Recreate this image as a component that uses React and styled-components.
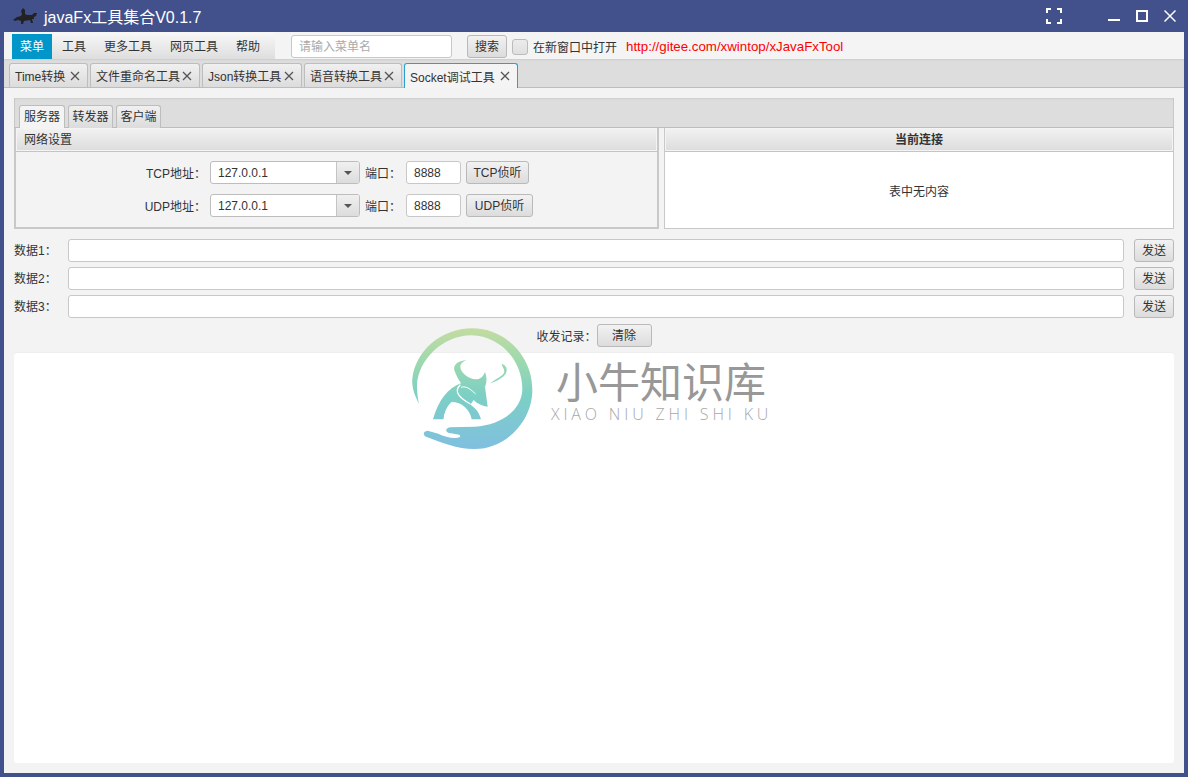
import React from 'react';
import styled, { createGlobalStyle } from 'styled-components';

const Global = createGlobalStyle`
  html, body { margin: 0; padding: 0; height: 100%; overflow: hidden; }
  body { font-family: "Liberation Sans", "Noto Sans CJK SC", sans-serif; font-size: 12px; color: #333; }
`;
const Frame = styled.div`
  width: 1188px; height: 777px; box-sizing: border-box; background: #42518c; position: relative;
  display: flex; flex-direction: column; padding: 0 4px 4px;
`;
const TitleBar = styled.div`
  height: 32px; flex: none; margin: 0 -4px; display: flex; align-items: center; color: #fff; padding-left: 12px;
`;
const AppIcon = styled.svg` width: 26px; height: 20px; margin-right: 6px; `;
const AppTitle = styled.div` font-size: 16px; flex: 1; `;
const WinControls = styled.div` display: flex; align-items: center; padding-right: 12px; `;
const WinBtn = styled.svg` width: ${p => p.$w}px; height: ${p => p.$h || 14}px; margin-left: ${p => p.$ml}px; display: block; `;
const Toolbar = styled.div`
  height: 27px; flex: none; background: #f4f4f4; display: flex; padding-left: 8px;
`;
const MenuBar = styled.div`
  display: flex; height: 27px; width: 263px; padding-top: 2px; box-sizing: border-box; margin-right: 16px; gap: 2px;
  background: linear-gradient(#f8f8f8, #dedede);
`;
const MenuItem = styled.div`
  height: 25px; line-height: 26px; padding: 0 8px; white-space: nowrap;
  background: ${p => p.$active ? '#0096c9' : 'transparent'};
  color: ${p => p.$active ? '#fff' : '#333'};
`;
const ToolGroup = styled.div` display: flex; align-items: center; padding-top: 2px; height: 25px; `;
const SearchBox = styled.div`
  width: 161px; height: 23px; box-sizing: border-box; border: 1px solid #c8c8c8; border-radius: 3px; background: #fff;
  color: #aaa; line-height: 22px; padding-left: 7px; margin-right: 15px;
`;
const Button = styled.div`
  box-sizing: border-box; height: 23px; width: ${p => p.$w}px; flex: none;
  border: 1px solid #b9b9b9; border-radius: 3px; background: linear-gradient(#f2f2f2, #dcdcdc);
  text-align: center; line-height: 22px; color: #333; margin-left: ${p => p.$ml || 0}px;
`;
const Check = styled.div`
  width: 16px; height: 16px; box-sizing: border-box; border: 1px solid #bbb; border-radius: 3px;
  background: linear-gradient(#ececec, #e0e0e0); margin: 0 5px;
`;
const Link = styled.div` color: #f00; margin-left: 9px; font-size: 13.3px; white-space: nowrap; `;
const TabStrip = styled.div`
  height: 29px; flex: none; background: #ddd; border-bottom: 1px solid #bdbdbd; box-sizing: border-box;
  display: flex; align-items: flex-end; padding-left: 5px; gap: 2px;
  box-shadow: inset 0 2px 2px -1px #ccc;
`;
const Tab = styled.div`
  box-sizing: border-box; height: 24px; width: ${p => p.$w}px; display: flex; align-items: center; white-space: nowrap;
  justify-content: space-between; padding: 0 7px 0 5px; color: #333; flex: none;
  border: 1px solid ${p => p.$active ? '#2a9fd0' : '#bdbdbd'}; border-bottom: none; border-radius: 3px 3px 0 0;
  background: ${p => p.$active ? '#f4f4f4' : 'linear-gradient(#f0f0f0, #dcdcdc)'};
  ${p => p.$active ? 'height: 25px; margin-bottom: -1px;' : ''}
`;
const CloseIcon = styled.svg` width: 10px; height: 10px; flex: none; `;
const Content = styled.div`
  flex: 1; background: #f3f3f3; padding: 10px; display: flex; flex-direction: column; min-height: 0;
`;
const InnerPane = styled.div`
  height: 131px; flex: none; display: flex; flex-direction: column;
`;
const InnerStrip = styled.div`
  height: 30px; flex: none; box-sizing: border-box; background: #ddd; border: 1px solid #c8c8c8; border-width: 0 1px 1px;
  border-bottom-color: #bdbdbd;
  display: flex; align-items: flex-end; padding-left: 4px; gap: 3px;
  box-shadow: inset 0 2px 2px -1px #ccc;
`;
const InnerTab = styled.div`
  box-sizing: border-box; height: 23px; width: ${p => p.$w}px; text-align: center; line-height: 22px; color: #333; margin-bottom: -1px;
  border: 1px solid #bdbdbd; border-bottom: none; border-radius: 3px 3px 0 0;
  background: ${p => p.$active ? '#f4f4f4' : 'linear-gradient(#f0f0f0, #dcdcdc)'};
`;
const Split = styled.div` flex: 1; display: flex; gap: 5px; min-height: 0; `;
const Settings = styled.div`
  width: 645px; flex: none; box-sizing: border-box; display: flex; flex-direction: column;
  border: 2px solid #c8c8c8; border-top: none;
`;
const SectionHead = styled.div`
  height: 24px; flex: none; box-sizing: border-box; line-height: 25px; color: #333;
  background: linear-gradient(#f2f2f2, #dcdcdc); border-bottom: 1px solid #c4c4c4;
  box-shadow: inset 0 0 0 1px #f4f4f4;
`;
const SettingsHead = styled(SectionHead)` padding-left: 8px; `;
const Form = styled.div`
  flex: 1; display: flex; flex-direction: column; gap: 10px; padding-top: 9px;
`;
const FormRow = styled.div` display: flex; align-items: center; height: 23px; `;
const FormLabel = styled.div` width: 190px; flex: none; text-align: right; white-space: nowrap; `;
const Combo = styled.div`
  width: 150px; height: 23px; flex: none; margin-left: 4px; box-sizing: border-box; border: 1px solid #bdbdbd; border-radius: 3px;
  display: flex; background: #fff; line-height: 22px; padding-left: 7px; overflow: hidden;
`;
const ComboText = styled.div` flex: 1; `;
const ComboArrow = styled.div`
  width: 22px; flex: none; border-left: 1px solid #c4c4c4; background: linear-gradient(#f0f0f0, #dcdcdc);
  display: flex; align-items: center; justify-content: center;
  &::after { content: ''; border: 4px solid transparent; border-top: 4px solid #555; border-bottom: 0; }
`;
const PortLabel = styled.div` margin-left: 5px; width: 41px; flex: none; white-space: nowrap; `;
const PortInput = styled.div`
  width: 55px; height: 23px; flex: none; box-sizing: border-box; border: 1px solid #c8c8c8; border-radius: 3px; background: #fff;
  line-height: 22px; padding-left: 7px;
`;
const Connections = styled.div`
  flex: 1; box-sizing: border-box; display: flex; flex-direction: column; background: #fff; border: 1px solid #c8c8c8; border-top: none;
`;
const ConnHead = styled(SectionHead)` text-align: center; font-weight: bold; `;
const ConnBody = styled.div` flex: 1; display: flex; align-items: center; justify-content: center; `;
const DataRows = styled.div` display: flex; flex-direction: column; gap: 5px; margin-top: 10px; `;
const DataRow = styled.div` display: flex; align-items: center; height: 23px; `;
const DataLabel = styled.div` width: 54px; flex: none; margin-bottom: 2px; white-space: nowrap; `;
const DataInput = styled.div`
  flex: 1; height: 23px; box-sizing: border-box; border: 1px solid #c8c8c8; border-radius: 3px; background: #fff;
`;
const LogBar = styled.div`
  display: flex; align-items: center; justify-content: center; height: 23px; margin-top: 6px;
`;
const LogArea = styled.div`
  flex: 1; margin-top: 6px; background: #fff; border-radius: 3px; box-shadow: 0 -1px 1px #eee;
`;
const Watermark = styled.div`
  position: absolute; left: 405px; top: 322px; width: 372px; height: 135px; pointer-events: none;
`;
const MarkIcon = styled.svg` position: absolute; left: 0; top: 0; width: 140px; height: 135px; `;
const MarkTitle = styled.div`
  position: absolute; left: 151px; top: 34px; font-size: 42px; line-height: 48px; color: #989898; white-space: nowrap;
  font-family: "Noto Sans CJK SC", sans-serif; font-weight: 400;
`;
const MarkSub = styled.div`
  position: absolute; left: 146px; top: 85px; font-size: 16px; line-height: 14px; color: #a8a8a8; white-space: nowrap;
  font-family: "Open Sans", sans-serif; font-weight: 300; letter-spacing: 3.85px;
`;

const X = () => (
  <CloseIcon viewBox="0 0 10 10"><path d="M1 1 L9 9 M9 1 L1 9" stroke="#555" strokeWidth="1.3" /></CloseIcon>
);

const tabs = [
  ['Time转换', 79], ['文件重命名工具', 110], ['Json转换工具', 100], ['语音转换工具', 98],
];

const Row = ({ proto, btnW }) => (
  <FormRow>
    <FormLabel>{proto}地址：</FormLabel>
    <Combo><ComboText>127.0.0.1</ComboText><ComboArrow /></Combo>
    <PortLabel>端口：</PortLabel>
    <PortInput>8888</PortInput>
    <Button $w={btnW} $ml={5}>{proto}侦听</Button>
  </FormRow>
);

export default function App() {
  return (
    <Frame>
      <Global />
      <TitleBar>
        <AppIcon viewBox="0 0 26 20">
          <path d="M1 14 L5 11 L9 10 L10 8 L9 5 L11 2 L13 4 L13 8 L15 9 L20 9 L22 7 L25 7 L24 10 L22 11 L22 13 L20 13 L21 17 L19 17 L18 14 L12 15 L11 18 L9 18 L9 15 L6 14 L3 15 Z" fill="#222" />
        </AppIcon>
        <AppTitle>javaFx工具集合V0.1.7</AppTitle>
        <WinControls>
          <WinBtn $w={16} $h={16} $ml={0} viewBox="0 0 16 16">
            <path d="M1 5V1H5 M11 1H15V5 M15 11V15H11 M5 15H1V11" fill="none" stroke="#fff" strokeWidth="2" />
          </WinBtn>
          <WinBtn $w={12} $ml={46} viewBox="0 0 12 14"><path d="M0 11H12" stroke="#fff" strokeWidth="2" /></WinBtn>
          <WinBtn $w={12} $ml={16} viewBox="0 0 12 14"><rect x="1" y="2" width="10" height="10" fill="none" stroke="#fff" strokeWidth="2" /></WinBtn>
          <WinBtn $w={12} $ml={16} viewBox="0 0 12 14"><path d="M0.5 1.5L11.5 12.5M11.5 1.5L0.5 12.5" stroke="#fff" strokeWidth="1.5" /></WinBtn>
        </WinControls>
      </TitleBar>
      <Toolbar>
        <MenuBar>
          <MenuItem $active>菜单</MenuItem>
          <MenuItem>工具</MenuItem>
          <MenuItem>更多工具</MenuItem>
          <MenuItem>网页工具</MenuItem>
          <MenuItem>帮助</MenuItem>
        </MenuBar>
        <ToolGroup>
          <SearchBox>请输入菜单名</SearchBox>
          <Button $w={40}>搜索</Button>
          <Check />
          <span>在新窗口中打开</span>
          <Link>http://gitee.com/xwintop/xJavaFxTool</Link>
        </ToolGroup>
      </Toolbar>
      <TabStrip>
        {tabs.map(([t, w]) => (
          <Tab key={t} $w={w}><span>{t}</span><X /></Tab>
        ))}
        <Tab $w={114} $active><span>Socket调试工具</span><X /></Tab>
      </TabStrip>
      <Content>
        <InnerPane>
          <InnerStrip>
            <InnerTab $active $w={46}>服务器</InnerTab>
            <InnerTab $w={45}>转发器</InnerTab>
            <InnerTab $w={45}>客户端</InnerTab>
          </InnerStrip>
          <Split>
            <Settings>
              <SettingsHead>网络设置</SettingsHead>
              <Form>
                <Row proto="TCP" btnW={63} />
                <Row proto="UDP" btnW={67} />
              </Form>
            </Settings>
            <Connections>
              <ConnHead>当前连接</ConnHead>
              <ConnBody>表中无内容</ConnBody>
            </Connections>
          </Split>
        </InnerPane>
        <DataRows>
          {[1, 2, 3].map(n => (
            <DataRow key={n}>
              <DataLabel>数据{n}：</DataLabel>
              <DataInput />
              <Button $w={40} $ml={10}>发送</Button>
            </DataRow>
          ))}
        </DataRows>
        <LogBar>
          <span>收发记录：</span>
          <Button $w={55}>清除</Button>
        </LogBar>
        <LogArea />
      </Content>
      <Watermark>
        <MarkIcon viewBox="0 0 420 405">
          <defs>
            <linearGradient id="markGrad" gradientUnits="userSpaceOnUse" x1="0" y1="20" x2="0" y2="381">
              <stop offset="0" stopColor="#c3dca0" />
              <stop offset="0.3" stopColor="#9ad8b0" />
              <stop offset="0.55" stopColor="#7cd0c4" />
              <stop offset="1" stopColor="#80bfe0" />
            </linearGradient>
          </defs>
          <g fill="url(#markGrad)">
            <path d="M42 245 C26 215 20 190 22 170 C32 85 110 19 202 19 C300 19 382 102 382 203 C382 300 300 381 210 381 C160 382 110 362 65 345 C53 340 53 328 68 326 L100 335 C120 345 150 352 165 345 C170 335 150 337 130 332 C120 328 122 318 135 316 L210 314 C290 310 352 262 352 200 C352 115 285 42 200 40 C110 40 38 118 36 190 C36 210 38 230 42 245 Z" />
            <path d="M185 114 C158 116 140 130 150 150 C154 160 160 172 168 184 C130 196 100 235 84 292 L116 292 C118 272 126 250 140 240 C170 240 195 262 200 292 L228 292 C222 270 212 258 196 248 L206 234 C218 246 232 252 248 254 L240 195 C246 180 246 165 240 150 C234 165 226 172 212 172 C190 172 166 150 166 135 C166 126 174 118 185 114 Z" />
            <path d="M290 125 C305 130 310 145 300 158 C290 170 270 178 255 185 C270 172 295 162 298 150 C298 140 292 135 290 125 Z" />
          </g>
          <g fill="none" stroke="#fff">
            <path d="M166 188 C150 204 152 222 196 246" strokeWidth="4" />
            <path d="M168 196 C185 190 200 205 212 216" strokeWidth="3" />
            <path d="M118 280 C122 262 132 252 146 250" strokeWidth="0" />
          </g>
          <path d="M116 292 C118 268 128 250 142 246 L146 256 C132 260 128 278 128 292 Z" fill="#fff" />
        </MarkIcon>
        <MarkTitle>小牛知识库</MarkTitle>
        <MarkSub>XIAO NIU ZHI SHI KU</MarkSub>
      </Watermark>
    </Frame>
  );
}
